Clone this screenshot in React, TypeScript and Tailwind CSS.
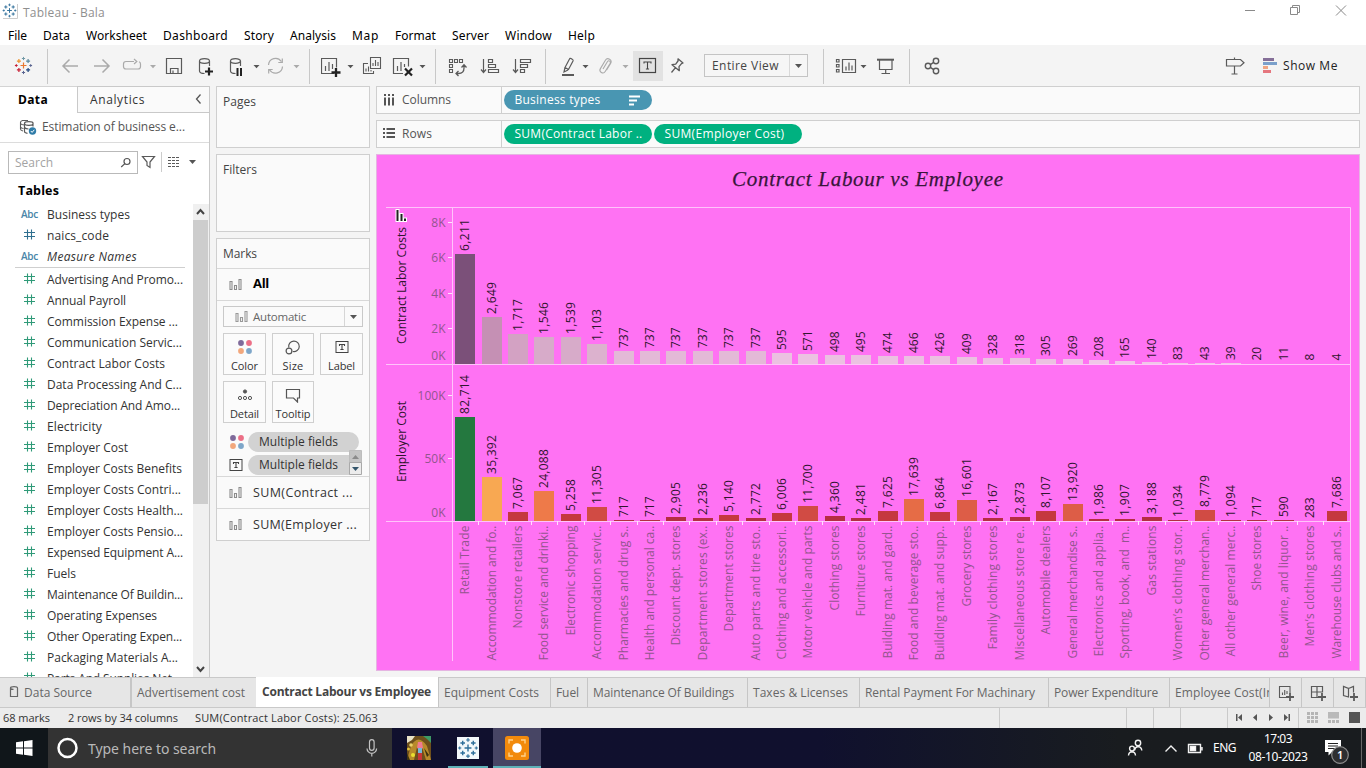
import { useLayoutEffect, useRef, type ReactNode } from "react";

/* Text set to a known advance width by spreading its letter spacing. */
function Fit({ w, className = "", children }: { w: number; className?: string; children: string }) {
  const ref = useRef<HTMLSpanElement>(null);
  useLayoutEffect(() => {
    const el = ref.current;
    if (!el) return;
    el.style.letterSpacing = "0px";
    const natural = el.getBoundingClientRect().width;
    el.style.letterSpacing = `${(w - natural) / children.length}px`;
  }, [w, children]);
  return (
    <span ref={ref} className={`inline-block shrink-0 whitespace-pre ${className}`}>
      {children}
    </span>
  );
}

/* Icon cell: its drawing uses window coordinates starting at (x, y). */
function Slot({ x, y = 45, w, h = 41, children, className = "" }: { x: number; y?: number; w: number; h?: number; children?: ReactNode; className?: string }) {
  return (
    <svg width={w} height={h} viewBox={`${x} ${y} ${w} ${h}`} className={`block shrink-0 ${className}`} fill="none" stroke="#5a5a5a" strokeWidth="1.2">
      {children}
    </svg>
  );
}

const Caret = ({ x, y = 65, c = "#555" }: { x: number; y?: number; c?: string }) => <path d={`M${x} ${y}h6l-3 3.200z`} fill={c} stroke="none" />;
const Sep = ({ x }: { x: number }) => <path d={`M${x} 49V84`} stroke="#c8c8c8" strokeWidth="1" />;

const plus = (cx: number, cy: number, r: number) => `M${cx - r} ${cy}h${2 * r}M${cx} ${cy - r}v${2 * r}`;

function TableauMark({ cx, cy, s = 1, mono }: { cx: number; cy: number; s?: number; mono?: boolean }) {
  const c = (k: string) => (mono ? "#2f6f9a" : k);
  return (
    <g transform={`translate(${cx} ${cy}) scale(${s})`} strokeWidth="1.2">
      <path d={plus(0, 0, 3)} stroke={c("#e8762d")} />
      <path d={plus(-4.6, -4.4, 2)} stroke={c("#eb912c")} />
      <path d={plus(4.6, -4.4, 2)} stroke={c("#5b879b")} />
      <path d={plus(-4.6, 4.4, 2)} stroke={c("#c72035")} />
      <path d={plus(4.6, 4.4, 2)} stroke={c("#1f457e")} />
      <path d={plus(0, -7, 1.6)} stroke={c("#7199a6")} strokeWidth="1" />
      <path d={plus(0, 7, 1.6)} stroke={c("#5b6591")} strokeWidth="1" />
      <path d={plus(-7.2, 0, 1.4)} stroke={c("#c72035")} strokeWidth="1" />
      <path d={plus(7.2, 0, 1.4)} stroke={c("#5b6591")} strokeWidth="1" />
    </g>
  );
}

const TIcon = ({ x, y, w, h, s }: { x: number; y: number; w: number; h: number; s: number }) => (
  <g>
    <rect x={x} y={y} width={w} height={h} stroke="#444" />
    <path d={`M${x + w / 2 - s} ${y + h / 2 - s + 1.5}v${-1.5}h${2 * s}v1.5M${x + w / 2} ${y + h / 2 - s}v${2 * s}m-1.6 0h3.2`} stroke="#444" strokeWidth="1.1" />
  </g>
);

function TitleBar() {
  return (
    <div className="flex h-6 shrink-0 bg-white">
      <Slot x={0} y={0} w={23} h={24}>
        <path d="M3 18.5h14.500V4" stroke="#ccc" strokeWidth="1" />
        <TableauMark cx={9.5} cy={10.5} s={0.8} mono />
      </Slot>
      <Fit w={82} className="text-[12px] leading-[25px] text-[#8f8f8f]">Tableau - Bala</Fit>
      <div className="flex-1" />
      <Slot x={1230} y={0} w={136} h={24}>
        <g stroke="#8a8a8a" strokeWidth="1">
          <path d="M1245 10.500h10M1290.500 7.500h7v7h-7zM1292.500 7.500v-2h7v7h-2M1336 5.500l10 10M1346 5.500l-10 10" />
        </g>
      </Slot>
    </div>
  );
}

const menus: [string, number][] = [
  ["File", 19], ["Data", 27], ["Worksheet", 61], ["Dashboard", 65], ["Story", 30], ["Analysis", 46],
  ["Map", 27], ["Format", 41], ["Server", 37], ["Window", 47], ["Help", 27],
];

function MenuBar() {
  return (
    <div className="flex h-[21px] shrink-0 gap-4 bg-white pl-2 font-['Noto_Sans',sans-serif] text-[12px] leading-[23px] text-black">
      {menus.map(([m, w]) => (
        <Fit key={m} w={w}>{m}</Fit>
      ))}
    </div>
  );
}

function Cyl({ x }: { x: number }) {
  return <path d={`M${x} 61v10c0 1.500 2 2.500 5 2.500M${x + 10} 61v5M${x} 61a5 2.300 0 0 0 10 0a5 2.300 0 0 0 -10 0`} />;
}

function Toolbar() {
  return (
    <div className="flex h-[41px] shrink-0 bg-[#f4f4f4]">
      <Slot x={0} w={54}><TableauMark cx={23.5} cy={65.5} /><Sep x={47.5} /></Slot>
      <Slot x={54} w={32}><path d="M62.500 66H78M69.500 59.500l-6.500 6.500 6.500 6.500" stroke="#aaa" strokeWidth="1.500" /></Slot>
      <Slot x={86} w={32}><path d="M94 66h15.500M102.500 59.500l6.500 6.500-6.500 6.500" stroke="#aaa" strokeWidth="1.500" /></Slot>
      <Slot x={118} w={42}>
        <path d="M134 61.500h-8a2.500 2.500 0 0 0-2.500 2.500v2.500a2.500 2.500 0 0 0 2.500 2.500h12a2.500 2.500 0 0 0 2.500-2.500V64q0-1.800-1.500-2.300M134 59l2.800 2.500-2.800 2.500" stroke="#aaa" />
        <Caret x={150} c="#aaa" />
      </Slot>
      <Slot x={160} w={30}><path d="M166.500 58.500h15v15h-15zM170.500 73.500v-5h7.500v5M173 73v-2.500" /></Slot>
      <Slot x={190} w={32}><Cyl x={199.5} /><path d="M209 67.500v8M205 71.500h8" stroke="#222" strokeWidth="2.200" /></Slot>
      <Slot x={222} w={40}><Cyl x={230.5} /><path d="M237.500 68v8M241 68v8" stroke="#222" strokeWidth="2" /><Caret x={253.500} /></Slot>
      <Slot x={262} w={60}>
        <path d="M268.500 65a7 7 0 0 1 12.800-3.500M282.500 66.500a7 7 0 0 1-12.800 3.500M282.300 58.500v4h-4M268.700 73.500v-4h4" stroke="#aaa" />
        <Caret x={293.500} c="#aaa" /><Sep x={309.5} />
      </Slot>
      <Slot x={322} w={36} className="-ml-px">
        <path d="M335 73.500h-12.500v-15h15v9M326.500 71v-5M330 71v-9M333.500 69v-5" /><path d="M337 68v9M332.500 72.500h9" stroke="#222" strokeWidth="2.300" /><Caret x={348.5} />
      </Slot>
      <Slot x={357} w={30}><path d="M370.500 57.500h10v11h-10zM368 63.500h-4.500v10h10v-2.500M373 66v-3M375.500 66v-6M378 66v-4M366 71.500v-3M368.500 71.500v-5M371 71.500v-1.500" strokeWidth="1.100" /></Slot>
      <Slot x={387} w={56}>
        <path d="M403 73.500h-9.500v-15h15v8M397.500 71v-5M401 71v-9M404.500 67v-3" /><path d="M405 68.500l7 7M412 68.500l-7 7" stroke="#222" strokeWidth="2.200" /><Caret x={419.5} /><Sep x={435.5} />
      </Slot>
      <Slot x={443} w={32}>
        <path d="M449.500 59.500h3v3h-3zM454.500 59.500h3v3h-3zM459.500 59.500h3v3h-3zM449.500 64.500h3v3h-3zM449.500 69.500h3v3h-3z" strokeWidth="1.100" />
        <path d="M464 65.500v2.500q0 5.500-5.500 5.500h-2M461.500 67.500l2.500-2.700 2.500 2.700M458.500 71l-2.500 2.500 2.500 2.500" strokeWidth="1.300" />
      </Slot>
      <Slot x={475} w={32}><path d="M483.500 59v13M481 69.500l2.500 3 2.500-3M488.500 59.500h4v3h-4zM488.500 64.500h7v3h-7zM488.500 69.500h10v3h-10z" /></Slot>
      <Slot x={507} w={48}><path d="M515.500 59v13M513 69.500l2.500 3 2.500-3M520.500 59.500h10v3h-10zM520.500 64.500h7v3h-7zM520.500 69.500h4v3h-4z" /><Sep x={545.5} /></Slot>
      <Slot x={555} w={38}>
        <path d="M565 67.500l4.500-8.500q.5-1 1.500-.5l1.500 1q1 .5.500 1.500l-4.500 8.500zM565 67.500l-1 4.500 4-2" /><path d="M562 75h12" strokeWidth="2" /><Caret x={582.5} />
      </Slot>
      <Slot x={593} w={40}>
        <path d="M603 69l4.500-7.500a1.600 1.600 0 0 1 2.700 1.700l-5 8.300a2.800 2.800 0 0 1-4.800-2.900l5-8.300a3 3 0 0 1 5.200 3.100l-4 6.600" stroke="#aaa" strokeWidth="1.100" /><Caret x={622.5} c="#aaa" />
      </Slot>
      <Slot x={633} w={30} h={30} y={51} className="mt-1.5 bg-[#e2e2e2]"><TIcon x={639.5} y={58.5} w={16} h={14} s={3.5} /></Slot>
      <Slot x={663} w={41}><path d="M678 58.800l5 4.200-1.500.7-2.500 3 .3 4-7.300-6 3.700-.5 2.300-3.200zM675.300 67.800l-3.800 4.700" strokeWidth="1.300" strokeLinejoin="round" /></Slot>
      <div className="mt-[9px] flex h-[23px] w-[104px] border border-[#c4c4c4] bg-[#f6f6f6]">
        <Fit w={67} className="ml-[7px] text-[12px] leading-[21px] text-[#444]">Entire View</Fit>
        <div className="ml-[10px] flex w-[19px] items-center justify-center border-l border-[#d9d9d9]">
          <svg width="7" height="4" viewBox="0 0 7 4"><path d="M0 0h7L3.500 4z" fill="#555" /></svg>
        </div>
      </div>
      <Slot x={808} w={64}>
        <Sep x={823.5} /><path d="M842.500 59.500h13v13h-13zM846 70.500v-4M849 70.500v-8M852 70.500v-5M836.500 59.500h2.500v2.500h-2.500zM836.500 64.500h2.500v2.500h-2.500zM836.500 69.500h2.500v2.500h-2.500z" /><Caret x={860.5} />
      </Slot>
      <Slot x={872} w={46}><path d="M877 59.700h17" strokeWidth="2" /><path d="M879.500 60v9.500h12.500V60M885.700 69.500v4M881.500 73.500h8.500" /><Sep x={909.5} /></Slot>
      <Slot x={918} w={32}><g strokeWidth="1.400"><circle cx="928" cy="66" r="2.700" /><circle cx="936" cy="61" r="2.700" /><circle cx="936" cy="71" r="2.700" /><path d="M930.300 64.700l3.400-2.300M930.300 67.300l3.400 2.300" /></g></Slot>
      <div className="flex-1" />
      <Slot x={1218} w={65}>
        <path d="M1226.500 59.500h14l3.500 3.200-3.500 3.300h-14zM1234.500 57.500v2M1234.500 66v8M1231.500 74h6" />
        <g stroke="none"><path d="M1263 58h11v3h-11z" fill="#856f98" /><path d="M1263 62h14v3h-14z" fill="#7ba0cb" /><path d="M1263 66h5v3h-5z" fill="#f0a582" /><path d="M1263 70h8v3h-8z" fill="#e5767e" /></g>
      </Slot>
      <Fit w={55} className="mr-[28px] text-[12px] leading-[41px] text-[#222]">Show Me</Fit>
    </div>
  );
}

const dims: [string, number, string][] = [["Business types", 83, "abc"], ["naics_code", 62, "num"], ["Measure Names", 90, "abc"]];
const measures: [string, number][] = [
  ["Advertising And Promo...", 136], ["Annual Payroll", 79], ["Commission Expense ...", 131], ["Communication Servic...", 135], ["Contract Labor Costs", 118],
  ["Data Processing And C...", 135], ["Depreciation And Amo...", 133], ["Electricity", 55], ["Employer Cost", 81], ["Employer Costs Benefits", 135],
  ["Employer Costs Contri...", 134], ["Employer Costs Health...", 136], ["Employer Costs Pensio...", 136], ["Expensed Equipment A...", 136], ["Fuels", 29],
  ["Maintenance Of Buildin...", 136], ["Operating Expenses", 110], ["Other Operating Expen...", 135], ["Packaging Materials A...", 131], ["Parts And Supplies Net...", 134],
];

const Hash = ({ c }: { c: string }) => (
  <svg width="47" height="21" viewBox="0 0 47 21" className="shrink-0"><path d="M27.500 5.500v10M31.500 5.500v10M24 8.500h11M24 12.500h11" stroke={c} strokeWidth="1.100" /></svg>
);

function DataPane() {
  return (
    <div className="flex w-[210px] flex-col border-r border-[#c9c9c9] bg-white">
      <div className="flex h-[27px] shrink-0">
        <div className="flex w-[77px] border-t border-[#d4d4d4] pl-[18px]"><Fit w={30} className="text-[12px] font-bold leading-[26px] text-black">Data</Fit></div>
        <div className="flex flex-1 border-b border-l border-t border-[#c9c9c9] bg-[#fafafa] pl-3">
          <Fit w={55} className="text-[12px] leading-[25px] text-[#333]">Analytics</Fit>
          <svg width="10" height="25" viewBox="194 87 10 25" className="ml-auto mr-[5px]"><path d="M200.500 94.500l-4 4.500 4 4.500" fill="none" stroke="#555" strokeWidth="1.300" /></svg>
        </div>
      </div>
      <div className="flex h-[30px] shrink-0 border-b border-[#dcdcdc]">
        <Slot x={0} y={113} w={42} h={29}>
          <path d="M28 120.500h-5.500q-2 .5-2 2v6.500q0 1.500 2.500 2M20.500 123.500q1 1.500 4 1.500M20.500 127q1 1.500 3 1.500" strokeWidth="1.100" />
          <path d="M24.500 123.500a4.300 1.800 0 0 1 8.600 0a4.300 1.800 0 0 1-8.600 0v8q0 1.500 3 1.800M33 123.500v3M24.500 127.500q1.500 1.500 4 1.500" />
          <circle cx="32.500" cy="131" r="3.700" fill="#2f7ca8" stroke="none" /><path d="M30.800 131l1.300 1.400 2.200-2.600" stroke="#fff" strokeWidth="1" />
        </Slot>
        <Fit w={143} className="text-[12px] leading-[28px] text-[#555]">Estimation of business e...</Fit>
      </div>
      <div className="flex h-[38px] shrink-0 pl-2 pt-2">
        <div className="flex h-[23px] w-[130px] border border-[#b9b9b9]">
          <Fit w={38} className="ml-1.5 text-[12px] leading-[22px] text-[#a3a3a3]">Search</Fit>
          <svg width="12" height="21" viewBox="120 152 12 21" className="ml-auto mr-[5px]" fill="none" stroke="#555" strokeWidth="1.200"><circle cx="127" cy="161.500" r="3" /><path d="M124.900 163.600l-3.700 3.400" /></svg>
        </div>
        <Slot x={138} y={151} w={60} h={23}>
          <path d="M142.500 156.500h12l-4.500 5.500v5.500l-3-2V162z" /><path d="M161.500 152v20" stroke="#ccc" strokeWidth="1" />
          <path d="M168 157.500h12M168 160.500h12M168 163.500h12M168 166.500h12" strokeDasharray="3 1" /><path d="M189 160h7l-3.500 4z" fill="#555" stroke="none" />
        </Slot>
      </div>
      <div className="flex h-[22px] shrink-0 pl-[18px]"><Fit w={41} className="text-[12.500px] font-bold leading-[20px] text-black">Tables</Fit></div>
      <div className="flex min-h-0 flex-1">
        <div className="w-[193px] overflow-hidden text-[12px] leading-[23px] text-[#333]">
          <div className="ml-[15px] flex w-[170px] flex-col border-b border-[#cfcfcf] pb-px">
            {dims.map(([n, w, t]) => (
              <div key={n} className="-ml-[15px] flex h-[21px]">
                {t === "abc" ? <Fit w={17} className="ml-[21px] mr-[9px] text-[10px] font-semibold text-[#4a86a8]">Abc</Fit> : <Hash c="#2f6f8f" />}
                <Fit w={w} className={n === "Measure Names" ? "italic" : ""}>{n}</Fit>
              </div>
            ))}
          </div>
          {measures.map(([n, w]) => (
            <div key={n} className="flex h-[21px]"><Hash c="#2f9a78" /><Fit w={w}>{n}</Fit></div>
          ))}
        </div>
        <div className="mt-px flex w-4 flex-col bg-[#f0f0f0]">
          <svg width="16" height="16" viewBox="0 0 16 16" fill="none" stroke="#444" strokeWidth="2"><path d="M4 10l3.500-4L11 10" /></svg>
          <div className="h-[284px] w-[15px] bg-[#cdcdcd]" />
          <svg width="16" height="16" viewBox="0 0 16 16" fill="none" stroke="#444" strokeWidth="2" className="mt-auto"><path d="M4 6l3.500 4L11 6" /></svg>
        </div>
      </div>
    </div>
  );
}

const BarsIcon = ({ c = "#8c8c8c" }: { c?: string }) => (
  <svg width="14" height="13" viewBox="0 0 14 13" fill="none" stroke={c} strokeWidth="1.100"><path d="M1 3.500h2v8H1zM5.500 7.500h2v4h-2zM10 1.500h2v10h-2z" /></svg>
);
const Dots = ({ r = 2.9 }: { r?: number }) => (
  <svg width="16" height="16" viewBox="0 0 16 16"><circle cx="4" cy="4" r={r} fill="#7f6a9a" /><circle cx="12" cy="4" r={r} fill="#ec6f86" /><circle cx="4" cy="12" r={r} fill="#f2a77c" /><circle cx="12" cy="12" r={r} fill="#7ea6c9" /></svg>
);

function MarkButton({ label, w, children, className }: { label: string; w: number; children: ReactNode; className: string }) {
  return (
    <div className={`flex h-[42px] flex-col items-center border border-[#cfcfcf] bg-[#fbfbfb] pt-1 ${className}`}>
      <div className="flex h-[18px] shrink-0 items-center">{children}</div>
      <Fit w={w} className="text-[11px] leading-[20px] text-[#333]">{label}</Fit>
    </div>
  );
}

const cardBox = "border border-[#cfcfcf] bg-[#fafafa]";

function Cards() {
  return (
    <div className="ml-1.5 flex w-[154px] flex-col gap-[6px] text-[12px] text-[#444]">
      <div className={`h-[62px] pl-1.5 ${cardBox}`}><Fit w={33} className="leading-[30px]">Pages</Fit></div>
      <div className={`h-[78px] pl-1.5 ${cardBox}`}><Fit w={34} className="leading-[30px]">Filters</Fit></div>
      <div className={`flex h-[303px] flex-col ${cardBox}`}>
        <div className="h-[30px] shrink-0 border-b border-[#d8d8d8] pl-1.5"><Fit w={34} className="leading-[30px]">Marks</Fit></div>
        <div className="flex h-8 shrink-0 items-center border-b border-[#d8d8d8] pl-[12px]"><BarsIcon /><Fit w={16} className="-mt-0.5 ml-[10px] text-[13px] font-bold text-black">All</Fit></div>
        <div className="ml-1.5 mt-[5px] flex h-[21px] w-[140px] shrink-0 items-center border border-[#c9c9c9] pl-[11px]">
          <BarsIcon c="#999" /><Fit w={53} className="ml-[4px] text-[11.500px] text-[#666]">Automatic</Fit>
          <div className="ml-auto flex h-full w-[18px] items-center justify-center border-l border-[#d6d6d6]"><svg width="7" height="4" viewBox="0 0 7 4"><path d="M0 0h7L3.500 4z" fill="#555" /></svg></div>
        </div>
        <div className="ml-1.5 mt-1.5 flex h-[48px] shrink-0 gap-[6px]">
          <MarkButton label="Color" w={27} className="w-[43px]"><Dots /></MarkButton>
          <MarkButton label="Size" w={21} className="w-[42px]"><svg width="18" height="17" viewBox="0 0 18 17" fill="none" stroke="#555" strokeWidth="1.200"><path d="M4.800 8.500a5.300 5.300 0 1 1 4 4" /><circle cx="5" cy="12" r="2.900" /></svg></MarkButton>
          <MarkButton label="Label" w={27} className="w-[43px]"><svg width="14" height="14" viewBox="0 0 14 14" fill="none"><TIcon x={1} y={1.5} w={12} h={11} s={2.5} /></svg></MarkButton>
        </div>
        <div className="ml-1.5 flex h-[50px] shrink-0 gap-[6px]">
          <MarkButton label="Detail" w={29} className="w-[43px]"><svg width="16" height="14" viewBox="0 0 16 14" fill="none" stroke="#555"><circle cx="8" cy="3.500" r="1.600" fill="#555" /><circle cx="3" cy="10" r="1.600" /><circle cx="8" cy="10" r="1.600" /><circle cx="13" cy="10" r="1.600" /></svg></MarkButton>
          <MarkButton label="Tooltip" w={35} className="w-[42px]"><svg width="16" height="15" viewBox="0 0 16 15" fill="none" stroke="#555" strokeWidth="1.200"><path d="M1.500 1.500h13v8.500h-2v4l-4-4h-7z" /></svg></MarkButton>
        </div>
        <div className="relative flex h-[45px] shrink-0 flex-col gap-[3px] pl-3 pt-px">
          <div className="flex h-5 items-center"><Dots /><div className="ml-[3px] h-5 w-[111px] rounded-full bg-[#d2d2d2] pl-[11px]"><Fit w={79} className="text-[12px] font-medium leading-5 text-[#333]">Multiple fields</Fit></div></div>
          <div className="flex h-5 items-center"><svg width="15" height="14" viewBox="0 0 15 14" fill="none"><TIcon x={1} y={1.5} w={12} h={11} s={2.5} /></svg><div className="ml-1 h-5 w-[112px] rounded-l-full bg-[#d2d2d2] pl-[11px]"><Fit w={79} className="text-[12px] font-medium leading-5 text-[#333]">Multiple fields</Fit></div></div>
          <svg width="13" height="25" viewBox="0 0 13 25" className="absolute right-[7px] top-[19px]"><path d="M.5.500h12v12H.5z" fill="#c4c4c4" stroke="#bdbdbd" /><path d="M.5 12.500h12v12H.5z" fill="#ececec" stroke="#a9a9a9" /><path d="M3 9h7L6.500 5z" fill="#8a8a8a" /><path d="M3 17h7l-3.500 4z" fill="#34556b" /></svg>
        </div>
        <div className="flex h-8 shrink-0 items-center border-t border-[#d8d8d8] pl-[12px] text-[#333]"><BarsIcon /><Fit w={100} className="ml-[10px] mt-px text-[12.500px]">SUM(Contract ...</Fit></div>
        <div className="flex h-8 shrink-0 items-center border-t border-[#d8d8d8] pl-[12px] text-[#333]"><BarsIcon /><Fit w={104} className="ml-[10px] mt-px text-[12.500px]">SUM(Employer ...</Fit></div>
      </div>
    </div>
  );
}

/* [category, label length, contractor cost, employer cost] */
const rows: [string, number, number, number][] = [
  ["Retail Trade", 69, 6211, 82714], ["Accommodation and fo..", 135, 2649, 35392], ["Nonstore retailers", 103, 1717, 7067], ["Food service and drinki..", 135, 1546, 24088],
  ["Electronic shopping", 110, 1539, 5258], ["Accommodation servic..", 134, 1103, 11305], ["Pharmacies and drug s..", 135, 737, 717], ["Health and personal ca..", 135, 737, 717],
  ["Discount dept. stores", 120, 737, 2905], ["Department stores (ex..", 135, 737, 2236], ["Department stores", 106, 737, 5140], ["Auto parts and tire sto..", 135, 737, 2772],
  ["Clothing and accessori..", 134, 595, 6006], ["Motor vehicle and parts", 133, 571, 11700], ["Clothing stores", 85, 498, 4360], ["Furniture stores", 91, 495, 2481],
  ["Building mat. and gard..", 133, 474, 7625], ["Food and beverage sto..", 135, 466, 17639], ["Building mat. and supp..", 135, 426, 6864], ["Grocery stores", 81, 409, 16601],
  ["Family clothing stores", 124, 328, 2167], ["Miscellaneous store re..", 135, 318, 2873], ["Automobile dealers", 109, 305, 8107], ["General merchandise s..", 133, 269, 13920],
  ["Electronics and applia..", 131, 208, 1986], ["Sporting, book, and  m..", 133, 165, 1907], ["Gas stations", 70, 140, 3188], ["Women’s clothing stor..", 135, 83, 1034],
  ["Other general merchan..", 135, 43, 8779], ["All other general merc..", 131, 39, 1094], ["Shoe stores", 65, 20, 717], ["Beer, wine, and liquor ..", 133, 11, 590],
  ["Men’s clothing stores", 121, 8, 283], ["Warehouse clubs and s..", 133, 4, 7686],
];

const contractColor = (v: number) => v > 5000 ? "#7b5079" : v > 2500 ? "#c590b4" : v > 1700 ? "#d3a2c3" : v > 1500 ? "#d7abc9" : v > 1000 ? "#dcb2ce" : v > 700 ? "#e3b9d7" : v > 300 ? "#ebc1e1" : "#f0c6e8";
const employerColor = (v: number) => v > 80000 ? "#24783f" : v > 30000 ? "#f8a852" : v > 20000 ? "#ee7a49" : v > 17000 ? "#e66c46" : v > 13000 ? "#dd5d47" : v > 8500 ? "#d14b44" : v > 5000 ? "#c5383f" : "#b52d41";

function Vert({ x, y, len, children, fill = "#31152f", anchor = "start" }: { x: number; y: number; len: number; children: string; fill?: string; anchor?: "start" | "end" }) {
  return (
    <text transform={`translate(${x} ${y}) rotate(-90)`} textLength={len} textAnchor={anchor} fill={fill} fontSize="12" xmlSpace="preserve">{children}</text>
  );
}

function Chart() {
  const soft = "#93558f";
  return (
    <svg width="984" height="517" viewBox="376 154 984 517" className="block" fontFamily="'Open Sans', sans-serif" fontSize="12">
      <path d="M376 154h984v517H376z" fill="#e5b5e2" />
      <path d="M377 155h982v515H377z" fill="#ff72f3" />
      <text x="732" y="186" textLength="271" fontFamily="'Viner Hand ITC', 'Z003', 'Liberation Serif', serif" fontStyle="italic" fontSize="21" fill="#38163a" stroke="#38163a" strokeWidth="0.25">Contract Labour vs Employee</text>
      <path d="M386 207.500h964.500M386 364.500h964.500M386 521.500h964.500M452.500 207.500v453.500M1350.500 207.500v453.500" stroke="#ffc4fa" fill="none" />
      {[[222.5, "8K"], [257.5, "6K"], [293.5, "4K"], [328.5, "2K"], [355.5, "0K"], [395.5, "100K"], [458.5, "50K"], [512.5, "0K"]].map(([y, t], i) => (
        <g key={i}>
          <text x="445.500" y={Number(y) + 4.5} textAnchor="end" fill={soft}>{t}</text>
          {t !== "0K" && <path d={`M448 ${y}h4`} stroke="#ffe0fd" />}
        </g>
      ))}
      <path d="M396.500 210h2v11h-2zM400.500 214h2v7h-2zM404 218.500h2v2.500h-2z" fill="#222" stroke="#fff" strokeWidth="2" paintOrder="stroke" />
      <Vert x={406} y={344} len={117}>Contract Labor Costs</Vert>
      <Vert x={406} y={482} len={81}>Employer Cost</Vert>
      {rows.map(([name, len, a, b], i) => {
        const x0 = 452.3 + i * 26.41;
        const x = Math.round(x0 + 2.8);
        const ya = Math.round(364 - a * 0.0177);
        const yb = Math.round(521 - b * 0.001257);
        const la = a.toLocaleString("en-US");
        const lb = b.toLocaleString("en-US");
        const width = (s: string) => s.replace(",", "").length * 6.85 + (s.includes(",") ? 4.6 : 0);
        return (
          <g key={name}>
            <path d={`M${x} ${ya}h20V364h-20z`} fill={contractColor(a)} />
            <path d={`M${x} ${yb}h20V521h-20z`} fill={employerColor(b)} />
            {i > 0 && <path d={`M${Math.round(x0 - 0.5) + 0.5} 521v4`} stroke="#ffe0fd" />}
            <Vert x={x + 14} y={Math.min(ya - 3, 360.500)} len={width(la)}>{la}</Vert>
            <Vert x={x + 14} y={yb - 3} len={width(lb)}>{lb}</Vert>
            <Vert x={x + 14} y={525.500} len={len} fill={soft} anchor="end">{name}</Vert>
          </g>
        );
      })}
    </svg>
  );
}

function Workspace() {
  return (
    <div className="ml-[6px] flex w-[984px] flex-col gap-[6px] text-[12px] text-[#555]">
      <div className={`flex h-7 ${cardBox}`}>
        <svg width="24" height="26" viewBox="377 87 24 26"><path d="M385 94v2M389 94v2M393 94v2M385 97.500v8M389 97.500v8M393 97.500v8" stroke="#555" strokeWidth="2" /></svg>
        <div className="w-[101px] border-r border-[#cfcfcf] pl-px"><Fit w={49} className="leading-[26px]">Columns</Fit></div>
        <div className="ml-0.5 mt-[3px] flex h-5 w-[148px] items-center rounded-full bg-[#4996b2] pl-[10.500px] text-white">
          <Fit w={86} className="font-medium leading-5">Business types</Fit>
          <svg width="12" height="11" viewBox="0 0 12 11" className="ml-auto mr-[11px]"><path d="M0 1.500h11M0 5.500h8M0 9.500h5" stroke="#fff" strokeWidth="1.800" /></svg>
        </div>
      </div>
      <div className={`flex h-7 ${cardBox}`}>
        <svg width="24" height="26" viewBox="377 121 24 26"><path d="M383 129h2M383 133h2M383 137h2M386.500 129h8.500M386.500 133h8.500M386.500 137h8.500" stroke="#555" strokeWidth="2" /></svg>
        <div className="w-[101px] border-r border-[#cfcfcf] pl-px"><Fit w={30} className="leading-[26px]">Rows</Fit></div>
        <div className="ml-0.5 mt-[3px] h-5 w-[148px] rounded-full bg-[#00b180] pl-[10.500px] text-white"><Fit w={128} className="font-medium leading-5">SUM(Contract Labor ..</Fit></div>
        <div className="ml-0.5 mt-[3px] h-5 w-[148px] rounded-full bg-[#00b180] pl-[10.500px] text-white"><Fit w={120} className="font-medium leading-5">SUM(Employer Cost)</Fit></div>
      </div>
      <Chart />
    </div>
  );
}

function SheetTab({ className, w, children }: { className: string; w: number; children: string }) {
  return <div className={`overflow-hidden border-r border-[#c6c6c6] pl-[5px] ${className}`}><Fit w={w} className="leading-[30px]">{children}</Fit></div>;
}

function Bottom() {
  return (
    <>
      <div className="flex h-[31px] shrink-0 border-b border-t border-[#c9c9c9] bg-[#e6e6e6] text-[12px] text-[#666]">
        <div className="flex w-[132px] border-r-2 border-[#c6c6c6]">
          <svg width="24" height="29" viewBox="0 678 24 29" fill="none" stroke="#666" strokeWidth="1.200"><path d="M10.500 688v8.500h7V688a3.500 1.400 0 0 0-7 0q0 1.400 3 1.400" /></svg>
          <Fit w={68} className="leading-[30px]">Data Source</Fit>
        </div>
        <SheetTab className="w-[124px] border-r-0" w={108}>Advertisement cost</SheetTab>
        <div className="-mt-px h-[30px] w-[183px] border-r border-[#c6c6c6] bg-white pl-[6px]"><Fit w={169} className="font-bold leading-[30px] text-[#444]">Contract Labour vs Employee</Fit></div>
        <SheetTab className="w-[112px]" w={95}>Equipment Costs</SheetTab>
        <SheetTab className="w-[37px]" w={23}>Fuel</SheetTab>
        <SheetTab className="w-[160px]" w={141}>Maintenance Of Buildings</SheetTab>
        <SheetTab className="w-[112px]" w={95}>Taxes &amp; Licenses</SheetTab>
        <SheetTab className="w-[189px]" w={170}>Rental Payment For Machinary</SheetTab>
        <SheetTab className="w-[121px]" w={104}>Power Expenditure</SheetTab>
        <SheetTab className="w-[100px]" w={103}>Employee Cost(Int</SheetTab>
        <Slot x={1270} y={678} w={96} h={29}>
          <path d="M1301.500 678v29M1333.500 678v29M1365.500 678v29" stroke="#c6c6c6" strokeWidth="1" />
          <path d="M1287 697.500h-7.500v-11h10.500v7M1282.500 695v-2.500M1284.700 695v-5M1287 694v-3" strokeWidth="1.100" />
          <path d="M1321 697.500h-9.500v-11h11v6M1317 686.500v11M1311.500 692h11" />
          <path d="M1348.500 697l-5-1.500v-9l5 2zM1348.500 688.500l5-2v6" />
          <path d={plus(1290, 697, 4) + plus(1322, 697, 4) + plus(1354, 697, 4)} strokeWidth="1.800" />
        </Slot>
      </div>
      <div className="flex h-5 shrink-0 bg-[#ececec] text-[11px] leading-[19px] text-[#333]">
        <Fit w={47} className="ml-[3px]">68 marks</Fit>
        <Fit w={110} className="ml-[18px]">2 rows by 34 columns</Fit>
        <Fit w={183} className="ml-[17px]">SUM(Contract Labor Costs): 25.063</Fit>
        <Slot x={990} y={708} w={376} h={20} className="ml-auto">
          <path d="M999.500 708v20M1126.500 708v20M1153.500 708v20M1180.500 708v20M1227.500 708v20M1298.500 708v20" stroke="#cacaca" strokeWidth="1" />
          <g fill="#555" stroke="none">
            <path d="M1236 714h1.500v7h-1.500zM1242 714v7l-4-3.500zM1257 714v7l-4-3.500zM1269 714v7l4-3.500zM1284 714v7l4-3.500zM1288.500 714h1.500v7h-1.500z" />
            <path d="M1349 712h11v11h-11z" />
          </g>
          <path d="M1307 713.500h11M1307 717.500h11M1307 721.500h11" stroke="#b5b5b5" strokeWidth="3" strokeDasharray="3 1" />
          <path d="M1328 712h11v6.500h-11z" fill="#b9b9b9" stroke="none" /><path d="M1328 721.500h11" stroke="#b5b5b5" strokeWidth="3" strokeDasharray="3 1" />
        </Slot>
      </div>
    </>
  );
}

function Taskbar() {
  return (
    <div className="flex h-10 shrink-0 bg-gradient-to-r from-[#10102e] from-[60%] to-[#191c1f] to-[82%] font-['Noto_Sans',sans-serif] text-white">
      <Slot x={0} y={728} w={48} h={40} className="bg-[#10161a]"><path d="M16 742.300l7-1v6.200h-7zM24 741.200l8.500-1.200v7.500H24zM16 748.500h7v6.200l-7-1zM24 748.500h8.500v7.500L24 754.800z" fill="#fff" stroke="none" /></Slot>
      <div className="flex w-[344px] bg-[#333333]">
        <Slot x={48} y={728} w={40} h={40}><circle cx="67.500" cy="748" r="9" stroke="#fff" strokeWidth="2.500" /></Slot>
        <Fit w={128} className="text-[14px] leading-[41px] text-[#b9b9b9]">Type here to search</Fit>
        <Slot x={360} y={728} w={32} h={40} className="ml-auto"><path d="M369.500 742a2.300 2.300 0 0 1 4.600 0v6a2.300 2.300 0 0 1-4.600 0zM367 748.500a4.800 4.800 0 0 0 9.600 0M371.800 753.500v3" stroke="#c4c4c4" /></Slot>
      </div>
      <Slot x={392} y={728} w={101} h={40}>
        <g stroke="none">
          <path d="M407 736h24v24h-24z" fill="#6d4f1c" />
          <path d="M407 736h8l-3 4-5 3z" fill="#e9e3c8" /><path d="M423 736h8v7l-4-4z" fill="#3d9a65" />
          <path d="M411 746q7-13 16 0l4 14h-5l-4-13h-5l-3 13h-7z" fill="#b88a2a" />
          <path d="M418 742h4l1 6-3 2-3-2z" fill="#f07a90" /><path d="M418 748h4v5h-4z" fill="#74b9d8" /><path d="M418 753h4v7h-4z" fill="#c83638" />
          <circle cx="411" cy="745" r="1.800" fill="#ead36a" /><circle cx="408.500" cy="749" r="1.500" fill="#e2c23c" /><circle cx="413" cy="755" r="2" fill="#e9e030" /><path d="M424 748l3 9 2-2z" fill="#3c3210" /><path d="M407 753l3 7h-3z" fill="#3c3210" />
          <path d="M457 737h22v22h-22z" fill="#f3f8fb" /><path d="M448 766h40v2h-40z" fill="#5eb1b7" />
        </g>
        <TableauMark cx={468} cy={748} s={1.15} mono />
      </Slot>
      <Slot x={493} y={728} w={48} h={40} className="bg-[#474564]">
        <rect x="505" y="736" width="24" height="24" rx="2.500" fill="#f28a0b" stroke="none" />
        <path d="M509 743.500V740h4M521 740h4v3.500M525 752.500v3.500h-4M513 756h-4v-3.500" stroke="#ffd28c" strokeWidth="1.400" />
        <circle cx="517" cy="748" r="4.800" fill="#fff" stroke="none" /><path d="M493 766h48v2h-48z" fill="#5eb1b7" stroke="none" />
      </Slot>
      <div className="flex-1" />
      <Slot x={1120} y={728} w={93} h={40}>
        <g stroke="#f2f2f2" strokeWidth="1.400">
          <circle cx="1138" cy="743" r="2.700" /><path d="M1134.500 750.500q.5-3.500 3.500-4 3.500.5 3.800 4" /><circle cx="1132" cy="748.500" r="2.400" /><path d="M1128.500 755.500q.3-3.600 3.500-3.800 3.200.2 3.500 3.800" />
          <path d="M1165.500 751.500l5.500-5.500 5.500 5.500" /><path d="M1188.500 744.500h12v8h-12zM1202 747v3.500" /><path d="M1190.500 746.500h5v4h-5z" fill="#fff" />
        </g>
      </Slot>
      <Fit w={23} className="text-[12px] leading-[39px]">ENG</Fit>
      <div className="ml-[12px] flex w-[60px] flex-col items-center pt-[2px] text-[12px] leading-[18px]"><Fit w={28}>17:03</Fit><Fit w={59}>08-10-2023</Fit></div>
      <div className="relative w-[58px] shrink-0">
        <Slot x={1308} y={728} w={58} h={40}>
          <path d="M1325 740h16v12h-9l-3.500 3.500V752h-3.500z" fill="#fff" stroke="none" /><path d="M1328 743.500h10M1328 746h10M1328 748.500h7" stroke="#222" strokeWidth="1" />
          <circle cx="1340" cy="755" r="8.300" fill="#2e2f31" stroke="#8d8d8d" /><path d="M1361.500 728v40" stroke="#666" strokeWidth="1" />
        </Slot>
        <span className="absolute left-[29px] top-[18px] text-[11px] font-semibold leading-[18px]">1</span>
      </div>
    </div>
  );
}

export default function App() {
  return (
    <div className="flex h-[768px] w-[1366px] flex-col overflow-hidden bg-[#f4f4f4] font-['Open_Sans','Noto_Sans',sans-serif]">
      <TitleBar />
      <MenuBar />
      <Toolbar />
      <div className="flex h-[591px] shrink-0">
        <DataPane />
        <Cards />
        <Workspace />
      </div>
      <Bottom />
      <Taskbar />
    </div>
  );
}
